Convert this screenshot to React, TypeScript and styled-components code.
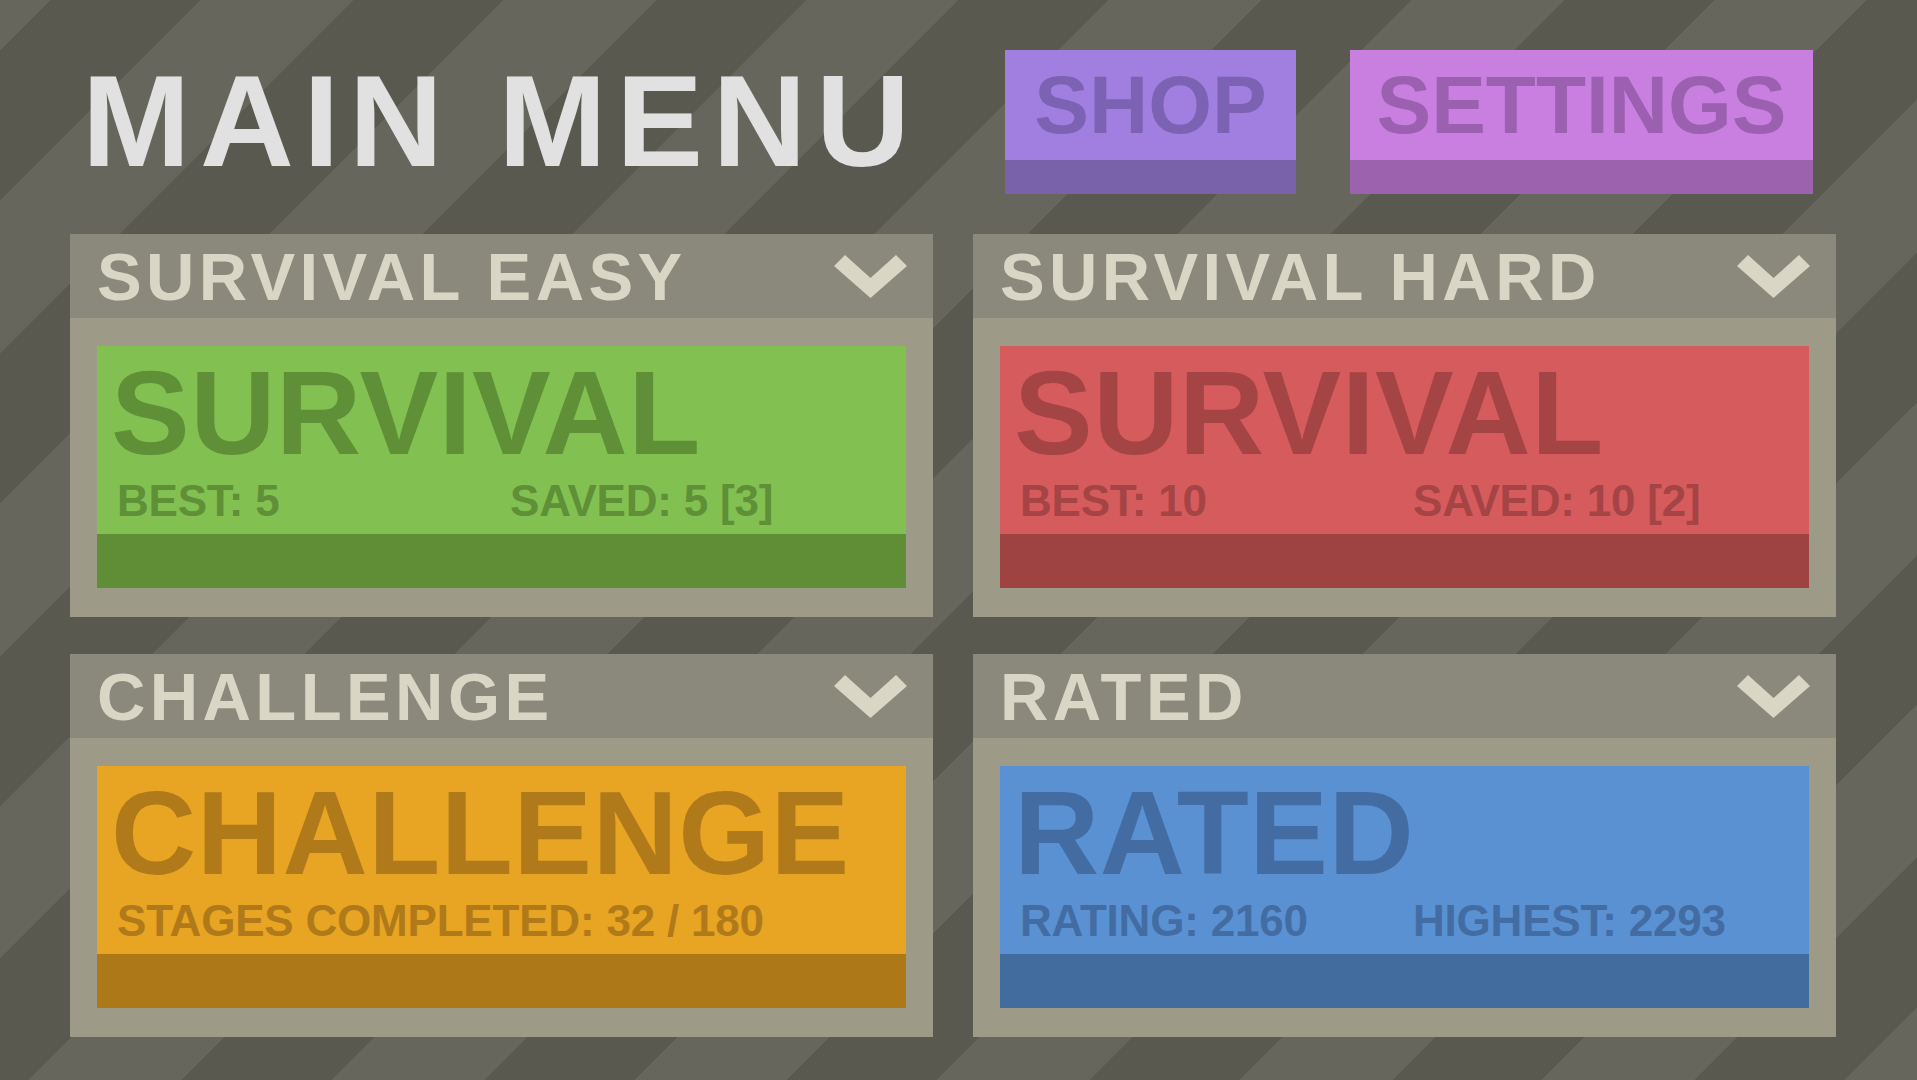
import styled, { createGlobalStyle } from "styled-components"

const GlobalStyle = createGlobalStyle`
    html, body {
        margin: 0;
        padding: 0;
    }
    body {
        font-family: "Liberation Sans", Arial, sans-serif;
        font-weight: 700;
    }
`

type Mode = {
    header: string
    title: string
    face: string
    dark: string
    ink: string
    stats: string[]
}

const modes: Mode[] = [
    {
        header: "SURVIVAL EASY",
        title: "SURVIVAL",
        face: "#83c052",
        dark: "#5f8e37",
        ink: "#5f8f37",
        stats: ["BEST: 5", "SAVED: 5 [3]"],
    },
    {
        header: "SURVIVAL HARD",
        title: "SURVIVAL",
        face: "#d65b5c",
        dark: "#9e4242",
        ink: "#a44445",
        stats: ["BEST: 10", "SAVED: 10 [2]"],
    },
    {
        header: "CHALLENGE",
        title: "CHALLENGE",
        face: "#e8a423",
        dark: "#ad7918",
        ink: "#b07a1b",
        stats: ["STAGES COMPLETED: 32 / 180"],
    },
    {
        header: "RATED",
        title: "RATED",
        face: "#5a91d3",
        dark: "#436c9e",
        ink: "#436da2",
        stats: ["RATING: 2160", "HIGHEST: 2293"],
    },
]

function Chevron() {
    return (
        <svg width="73" height="43" viewBox="0 0 73 43">
            <polygon points="0,11 11,0 36.5,23 62,0 73,11 36.5,43" fill="#d9d6c6" />
        </svg>
    )
}

export default function App() {
    return (
        <Page>
            <GlobalStyle />
            <TopBar>
                <Title>MAIN MENU</Title>
                <Buttons>
                    <MenuButton $width={291} $face="#a07fe0" $dark="#7a62ab" $ink="#7c62b3">
                        SHOP
                    </MenuButton>
                    <MenuButton $width={463} $face="#c87fe0" $dark="#9c62ae" $ink="#9b61b0">
                        SETTINGS
                    </MenuButton>
                </Buttons>
            </TopBar>

            <ModeGrid>
                {modes.map((m) => (
                    <Panel key={m.header}>
                        <PanelHeader>
                            <PanelTitle>{m.header}</PanelTitle>
                            <Chevron />
                        </PanelHeader>
                        <PanelBody>
                            <ModeCard $face={m.face} $dark={m.dark} $ink={m.ink}>
                                <ModeName>{m.title}</ModeName>
                                <Stats>
                                    {m.stats.map((s) => (
                                        <span key={s}>{s}</span>
                                    ))}
                                </Stats>
                            </ModeCard>
                        </PanelBody>
                    </Panel>
                ))}
            </ModeGrid>
        </Page>
    )
}

const Page = styled.div`
    width: 1917px;
    height: 1080px;
    overflow: hidden;
    box-sizing: border-box;
    padding-top: 50px;
    background: repeating-linear-gradient(
        135deg,
        #67665d 0 36px,
        #5a5950 36px 142px,
        #67665d 142px 214px
    );
`

const TopBar = styled.header`
    display: flex;
    align-items: flex-start;
    height: 144px;
    padding: 0 104px 0 82px;
`

const Title = styled.h1`
    margin: 6px 0 0;
    font-size: 130px;
    line-height: 1;
    letter-spacing: 9.6px;
    font-weight: 700;
    color: #e2e1e2;
    white-space: nowrap;
`

const Buttons = styled.div`
    display: flex;
    gap: 54px;
    margin-left: auto;
`

const MenuButton = styled.button<{ $width: number; $face: string; $dark: string; $ink: string }>`
    width: ${(p) => p.$width}px;
    height: 144px;
    box-sizing: border-box;
    display: flex;
    align-items: center;
    justify-content: center;
    padding: 0;
    border: none;
    border-bottom: 34px solid ${(p) => p.$dark};
    background: ${(p) => p.$face};
    color: ${(p) => p.$ink};
    font-family: "Liberation Sans", Arial, sans-serif;
    font-weight: 700;
    font-size: 82px;
    line-height: 1;
    letter-spacing: 0;
    cursor: pointer;
`

const ModeGrid = styled.main`
    display: grid;
    grid-template-columns: 863px 863px;
    column-gap: 40px;
    row-gap: 37px;
    margin: 40px 0 0 70px;
`

const Panel = styled.section`
    display: flex;
    flex-direction: column;
    height: 383px;
    background: #9d9a87;
`

const PanelHeader = styled.div`
    display: flex;
    align-items: center;
    justify-content: space-between;
    height: 84px;
    padding: 0 26px 0 27px;
    background: #8b897b;
`

const PanelTitle = styled.h2`
    margin: 0;
    font-size: 67px;
    line-height: 1;
    letter-spacing: 4.4px;
    font-weight: 700;
    color: #d9d6c6;
`

const PanelBody = styled.div`
    padding: 28px 27px 29px;
`

const ModeCard = styled.div<{ $face: string; $dark: string; $ink: string }>`
    height: 242px;
    box-sizing: border-box;
    padding: 8px 0 0 20px;
    background: ${(p) => p.$face};
    border-bottom: 54px solid ${(p) => p.$dark};
    color: ${(p) => p.$ink};
`

const ModeName = styled.div`
    margin-left: -6px;
    font-size: 118px;
    line-height: 1;
    letter-spacing: 0.5px;
`

const Stats = styled.div`
    display: grid;
    grid-template-columns: 393px auto;
    margin-top: 7px;
    font-size: 44px;
    line-height: 1;
    letter-spacing: -0.2px;
    white-space: nowrap;
`
